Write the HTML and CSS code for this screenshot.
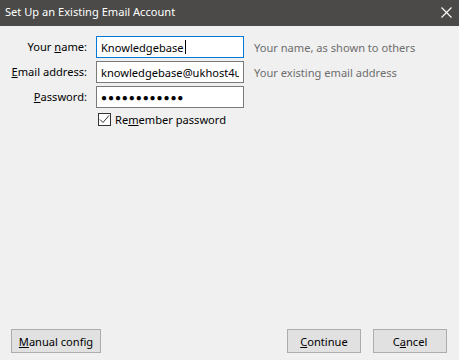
FILE: index.html
```html
<!DOCTYPE html>
<html>
<head>
<meta charset="utf-8">
<link rel="stylesheet" href="styles.css">
</head>
<body>
<div class="window">
  <div class="titlebar">
    <span class="title">Set Up an Existing Email Account</span>
    <svg class="close" width="11" height="11" viewBox="0 0 11 11"><path d="M0.5 0.5 L10.5 10.5 M10.5 0.5 L0.5 10.5" stroke="#fff" stroke-width="1.1" fill="none"/></svg>
  </div>
  <div class="content">
    <div class="form">
      <label class="lbl">Your <u>n</u>ame:</label>
      <div class="input focused">Knowledgebase<span class="caret"></span></div>
      <span class="hint">Your name, as shown to others</span>

      <label class="lbl"><u>E</u>mail address:</label>
      <div class="input"><span class="clip">knowledgebase@ukhost4u.com</span></div>
      <span class="hint">Your existing email address</span>

      <label class="lbl"><u>P</u>assword:</label>
      <div class="input dots">●●●●●●●●●●●●</div>
      <span></span>

      <span></span>
      <div class="check-row">
        <span class="checkbox"><svg width="11" height="11" viewBox="0 0 11 11"><path d="M1 5.5 L4 8.5 L10 1.5" stroke="#333" stroke-width="1" fill="none"/></svg></span>
        <span class="check-label">Re<u>m</u>ember password</span>
      </div>
    </div>
  </div>
  <div class="footer">
    <button class="btn manual"><u>M</u>anual config</button>
    <div class="right">
      <button class="btn"><u>C</u>ontinue</button>
      <button class="btn">C<u>a</u>ncel</button>
    </div>
  </div>
</div>
</body>
</html>
```

FILE: styles.css
```css
html, body {
  margin: 0;
  padding: 0;
}
body {
  font-family: "Segoe UI", "Noto Sans", "Open Sans", sans-serif;
  font-size: 11.1px;
  color: #000;
  background: #f0f0f0;
}
.window {
  width: 459px;
  height: 360px;
  display: flex;
  flex-direction: column;
}
.titlebar {
  height: 26px;
  background: #4b4a48;
  color: #fff;
  display: flex;
  align-items: center;
  justify-content: space-between;
  padding: 0 7px 2px 5px;
  box-sizing: border-box;
}
.title {
  font-size: 11.1px;
  line-height: 16px;
}
.close {
  display: block;
}
.content {
  flex: 1;
}
.form {
  display: grid;
  grid-template-columns: 87px 148px auto;
  column-gap: 9px;
  row-gap: 3px;
  grid-auto-rows: 22px;
  margin-top: 10px;
  align-items: center;
}
.lbl {
  justify-self: end;
  color: #000;
  line-height: 16px;
}
.input {
  height: 22px;
  box-sizing: border-box;
  border: 1px solid #7a7a7a;
  background: #fff;
  padding: 0 4px;
  line-height: 19px;
  white-space: nowrap;
  overflow: hidden;
  display: flex;
  align-items: center;
}
.clip {
  overflow: hidden;
  display: block;
  max-width: 100%;
}
.input.focused {
  border-color: #0078d7;
}
.caret {
  display: inline-block;
  width: 1px;
  height: 14px;
  background: #000;
  margin-left: 1px;
}
.dots {
  font-size: 10px;
  letter-spacing: 0.9px;
}
.hint {
  color: #6d6d6d;
  padding-left: 1px;
}
.check-row {
  display: flex;
  align-items: center;
  gap: 4px;
  padding-left: 2px;
  align-self: start;
  margin-top: 1px;
}
.checkbox {
  width: 13px;
  height: 13px;
  box-sizing: border-box;
  border: 1px solid #333;
  background: #fff;
  display: flex;
  align-items: center;
  justify-content: center;
}
.checkbox svg {
  display: block;
}
.footer {
  display: flex;
  justify-content: space-between;
  padding: 0 12px 7px 11px;
}
.right {
  display: flex;
  gap: 12px;
}
.btn {
  font-family: inherit;
  font-size: 11.1px;
  height: 24px;
  background: #e1e1e1;
  border: 1px solid #adadad;
  padding: 0;
  color: #000;
  width: 74px;
}
.btn.manual {
  width: 90px;
}
```
